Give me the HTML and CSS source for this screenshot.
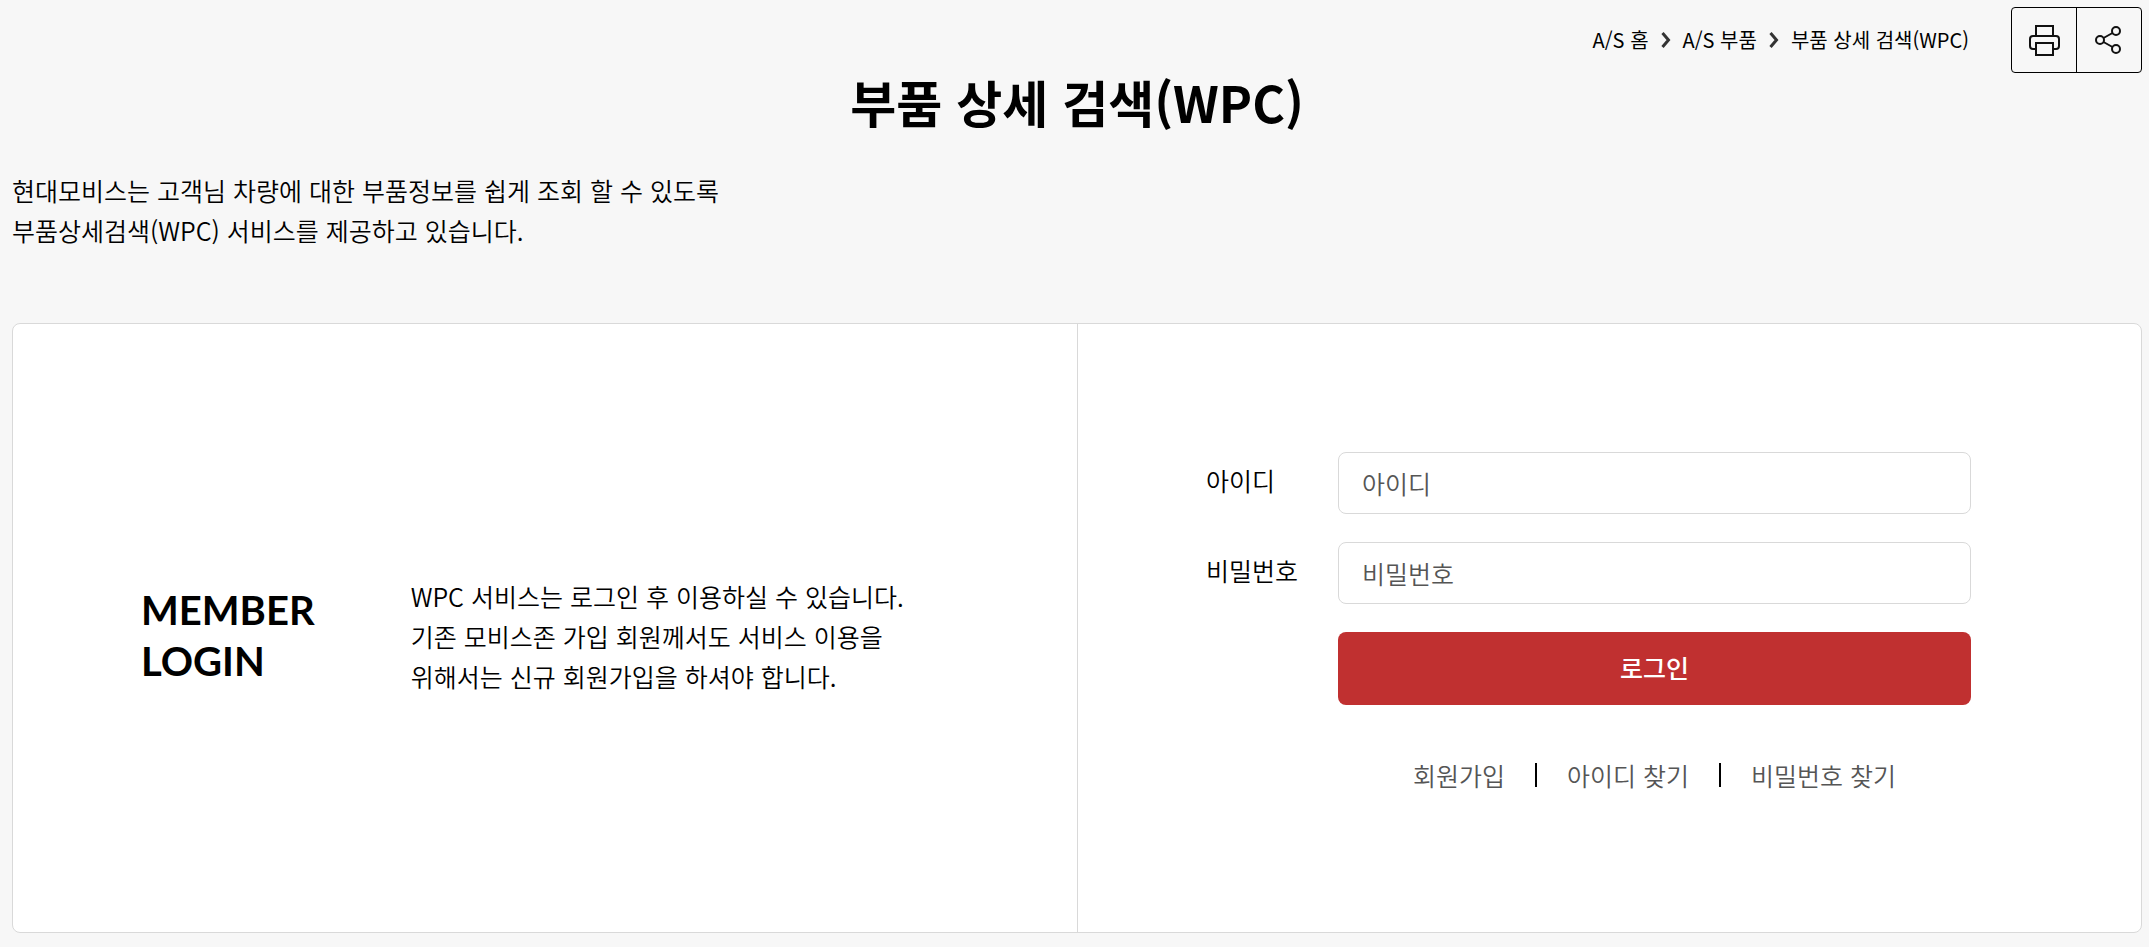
FILE: index.html
```html
<!DOCTYPE html>
<html lang="ko">
<head>
  <meta charset="UTF-8" />
  <meta name="viewport" content="width=device-width, initial-scale=1.0" />
  <title>부품 상세 검색(WPC)</title>
  <link rel="stylesheet" href="styles.css">
</head>
<body>
  <!-- Breadcrumb and page tools -->
  <header class="top">
    <nav class="breadcrumb">
      <a href="#">A/S 홈</a>
      <svg class="breadcrumb__arrow" viewBox="0 0 10 18" aria-hidden="true"><path d="M1.500 2l6 7-6 7" /></svg>
      <a href="#">A/S 부품</a>
      <svg class="breadcrumb__arrow" viewBox="0 0 10 18" aria-hidden="true"><path d="M1.500 2l6 7-6 7" /></svg>
      <a href="#">부품 상세 검색(WPC)</a>
    </nav>
    <div class="tools">
      <button type="button" class="tools__btn" aria-label="인쇄">
        <svg viewBox="0 0 32 32" aria-hidden="true">
          <path d="M8 12V2h17v10" />
          <path d="M7 25H5a3 3 0 0 1-3-3v-7a3 3 0 0 1 3-3h23a3 3 0 0 1 3 3v7a3 3 0 0 1-3 3h-2" />
          <path d="M8 19h17v12H8z" />
        </svg>
      </button>
      <button type="button" class="tools__btn" aria-label="공유">
        <svg viewBox="0 0 32 32" aria-hidden="true">
          <circle cx="7" cy="16" r="4" />
          <circle cx="23" cy="7" r="4" />
          <circle cx="23" cy="25" r="4" />
          <path d="M10.500 14l9-5M10.500 18l9 5" />
        </svg>
      </button>
    </div>
  </header>

  <main>
    <h1>부품 상세 검색(WPC)</h1>
    <p class="intro">현대모비스는 고객님 차량에 대한 부품정보를 쉽게 조회 할 수 있도록<br>부품상세검색(WPC) 서비스를 제공하고 있습니다.</p>

    <!-- Login box -->
    <section class="login">
      <div class="login__info">
        <h2>MEMBER<br>LOGIN</h2>
        <p>WPC 서비스는 로그인 후 이용하실 수 있습니다.<br>기존 모비스존 가입 회원께서도 서비스 이용을<br>위해서는 신규 회원가입을 하셔야 합니다.</p>
      </div>
      <form class="login__form">
        <label for="userId">아이디</label>
        <input type="text" id="userId" placeholder="아이디" />
        <label for="userPw">비밀번호</label>
        <input type="password" id="userPw" placeholder="비밀번호" />
        <button type="submit" class="login__btn">로그인</button>
        <ul class="login__links">
          <li><a href="#">회원가입</a></li>
          <li><a href="#">아이디 찾기</a></li>
          <li><a href="#">비밀번호 찾기</a></li>
        </ul>
      </form>
    </section>
  </main>
</body>
</html>
```
FILE: styles.css
```css
:root {
  --bg-color: #f7f7f7;
  --text-color: #000;
  --muted-color: #555;
  --border-color: #d9d9d9;
  --btn-bg: #c03030;
}

* {
  box-sizing: border-box;
}

body {
  margin: 0;
  padding: 7px 7px 14px 12px;
  background-color: var(--bg-color);
  color: var(--text-color);
  font-family: 'Noto Sans CJK KR', sans-serif;
  font-size: 25px;
  font-weight: 350;
  line-height: 40px;
}

h1, h2, p, ul {
  margin: 0;
  padding: 0;
}

a {
  color: inherit;
  text-decoration: none;
}

button, input {
  font: inherit;
}

.top {
  display: flex;
  justify-content: flex-end;
  align-items: center;
  gap: 42px;
}

.breadcrumb {
  display: flex;
  align-items: center;
  gap: 12px;
  font-size: 20px;
  font-weight: 400;
}

.breadcrumb__arrow {
  width: 10px;
  height: 18px;
  fill: none;
  stroke: #333;
  stroke-width: 3;
}

.tools {
  display: flex;
  border: 1px solid #000;
  border-radius: 4px;
}

.tools__btn {
  display: flex;
  align-items: center;
  justify-content: center;
  width: 64px;
  height: 64px;
  padding: 0;
  border: 0;
  background: none;
  cursor: pointer;
}

.tools__btn + .tools__btn {
  width: 65px;
  border-left: 1px solid #000;
}

.tools__btn svg {
  width: 32px;
  height: 32px;
  fill: none;
  stroke: #111;
  stroke-width: 2;
}

h1 {
  font-size: 50px;
  font-weight: 700;
  line-height: 56px;
  text-align: center;
}

.intro {
  margin: 41px 0 73px;
}

.login {
  display: grid;
  grid-template-columns: 1fr 1fr;
  background-color: #fff;
  border: 1px solid var(--border-color);
  border-radius: 8px;
}

.login__info {
  display: flex;
  align-items: center;
  gap: 96px;
  padding: 16px 128px 0;
}

.login__info h2 {
  font-family: Lato, sans-serif;
  font-size: 40px;
  font-weight: 700;
  line-height: 51px;
}

.login__form {
  display: grid;
  grid-template-columns: 132px 1fr;
  row-gap: 28px;
  padding: 128px 170px 137px 128px;
  border-left: 1px solid var(--border-color);
}

.login__form label {
  padding-top: 8px;
}

.login__form input {
  width: 100%;
  height: 62px;
  padding: 0 23px;
  border: 1px solid var(--border-color);
  border-radius: 8px;
  background-color: #fff;
}

.login__form input::placeholder {
  color: var(--muted-color);
}

.login__btn {
  grid-column: 2;
  height: 73px;
  padding: 0 0 4px;
  border: 0;
  border-radius: 8px;
  background-color: var(--btn-bg);
  color: #fff;
  font-weight: 500;
  cursor: pointer;
}

.login__links {
  grid-column: 2;
  display: flex;
  justify-content: center;
  margin-top: 22px;
  list-style: none;
  color: var(--muted-color);
}

.login__links li {
  display: flex;
  align-items: center;
}

.login__links li + li::before {
  content: "";
  width: 2px;
  height: 24px;
  margin: 0 30px;
  background-color: var(--text-color);
}
```
